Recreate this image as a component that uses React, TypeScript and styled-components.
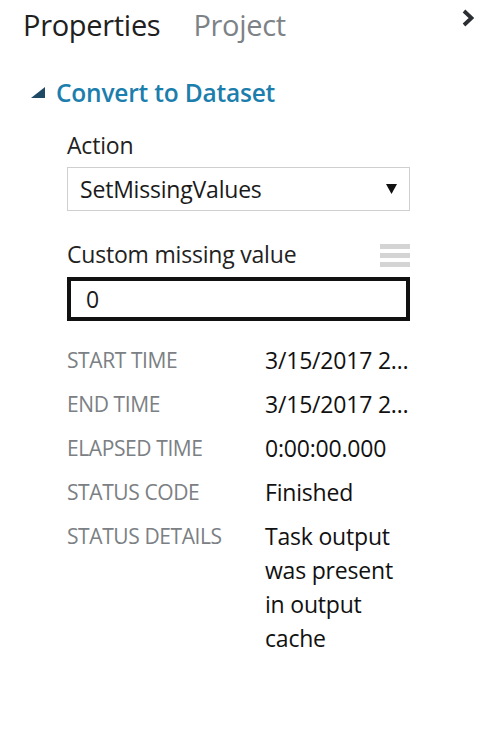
import React from 'react';
import styled, { createGlobalStyle } from 'styled-components';

const GlobalStyle = createGlobalStyle`
  html, body {
    margin: 0;
    padding: 0;
    background: #ffffff;
  }
  body {
    font-family: 'Open Sans', 'Noto Sans', sans-serif;
    color: #1a1a1a;
  }
`;

interface Detail {
  label: string;
  value: string;
  truncate?: boolean;
}

const details: Detail[] = [
  { label: 'Start time', value: '3/15/2017 2:14:08 PM', truncate: true },
  { label: 'End time', value: '3/15/2017 2:14:09 PM', truncate: true },
  { label: 'Elapsed time', value: '0:00:00.000' },
  { label: 'Status code', value: 'Finished' },
  { label: 'Status details', value: 'Task output was present in output cache' },
];

const Panel = styled.div`
  width: 500px;
  height: 756px;
  box-sizing: border-box;
  padding: 6px 0 0 23px;
`;

const TabBar = styled.div`
  display: flex;
  align-items: flex-start;
  height: 40px;
  padding-right: 26px;
`;

const Tab = styled.div<{ active?: boolean }>`
  font-size: 29px;
  line-height: 38px;
  color: ${p => (p.active ? '#202020' : '#7d8287')};
  margin-right: 33px;
  letter-spacing: -0.3px;
`;

const Collapse = styled.div`
  margin-left: auto;
  margin-top: 3px;
  width: 12px;
  height: 18px;
`;

const Section = styled.div`
  margin-top: 30px;
`;

const SectionHeader = styled.div`
  display: flex;
  align-items: center;
  gap: 11px;
  margin-left: 8px;
  height: 32px;
`;

const SectionTitle = styled.span`
  font-size: 24.5px;
  font-weight: 600;
  color: #1b7ead;
  letter-spacing: -0.2px;
`;

const Body = styled.div`
  padding-left: 44px;
  width: 343px;
  margin-top: 21px;
`;

const FieldLabel = styled.div`
  display: flex;
  justify-content: space-between;
  align-items: center;
  font-size: 23px;
  line-height: 32px;
  color: #222;
  letter-spacing: -0.2px;
`;

const Select = styled.div`
  margin-top: 6px;
  height: 44px;
  box-sizing: border-box;
  border: 1px solid #cfcfcf;
  display: flex;
  align-items: center;
  justify-content: space-between;
  padding: 0 12px 0 12px;
  font-size: 23px;
  color: #1a1a1a;
  letter-spacing: -0.2px;
`;

const Spacer = styled.div`
  height: 27px;
`;

const Hamburger = styled.div`
  display: flex;
  flex-direction: column;
  gap: 4px;
  width: 30px;
  margin-top: 3px;

  span {
    display: block;
    height: 5px;
    background: #d4d4d4;
  }
`;

const Input = styled.div`
  margin-top: 7px;
  height: 44px;
  box-sizing: border-box;
  border: 4px solid #111;
  display: flex;
  align-items: center;
  padding-left: 15px;
  font-size: 23px;
  color: #1a1a1a;
`;

const DetailGrid = styled.div`
  margin-top: 22px;
  display: grid;
  grid-template-columns: 198px 145px;
  row-gap: 10px;
`;

const DetailLabel = styled.div`
  font-size: 21px;
  line-height: 34px;
  color: #7b8084;
  text-transform: uppercase;
  letter-spacing: -0.4px;
`;

const DetailValue = styled.div<{ truncate?: boolean }>`
  font-size: 23px;
  line-height: 34px;
  color: #111;
  letter-spacing: -0.2px;
  ${p =>
    p.truncate
      ? `white-space: nowrap; overflow: hidden; text-overflow: ellipsis;`
      : ''}
`;

const App: React.FC = () => {
  return (
    <>
      <GlobalStyle />
      <Panel>
        <TabBar>
          <Tab active>Properties</Tab>
          <Tab>Project</Tab>
          <Collapse>
            <svg width="12" height="18" viewBox="0 0 12 18">
              <path d="M2 2 L9.5 9 L2 16" fill="none" stroke="#2b2f33" strokeWidth="3.8" />
            </svg>
          </Collapse>
        </TabBar>
        <Section>
          <SectionHeader>
            <svg width="14" height="11" viewBox="0 0 14 11">
              <polygon points="14,0 14,11 0,11" fill="#1f4a66" />
            </svg>
            <SectionTitle>Convert to Dataset</SectionTitle>
          </SectionHeader>
          <Body>
            <FieldLabel>Action</FieldLabel>
            <Select>
              <span>SetMissingValues</span>
              <svg width="11" height="10" viewBox="0 0 11 10">
                <polygon points="0,0 11,0 5.5,10" fill="#111" />
              </svg>
            </Select>
            <Spacer />
            <FieldLabel>
              Custom missing value
              <Hamburger>
                <span />
                <span />
                <span />
              </Hamburger>
            </FieldLabel>
            <Input>0</Input>
            <DetailGrid>
              {details.map(d => (
                <React.Fragment key={d.label}>
                  <DetailLabel>{d.label}</DetailLabel>
                  <DetailValue truncate={d.truncate}>{d.value}</DetailValue>
                </React.Fragment>
              ))}
            </DetailGrid>
          </Body>
        </Section>
      </Panel>
    </>
  );
};

export default App;
